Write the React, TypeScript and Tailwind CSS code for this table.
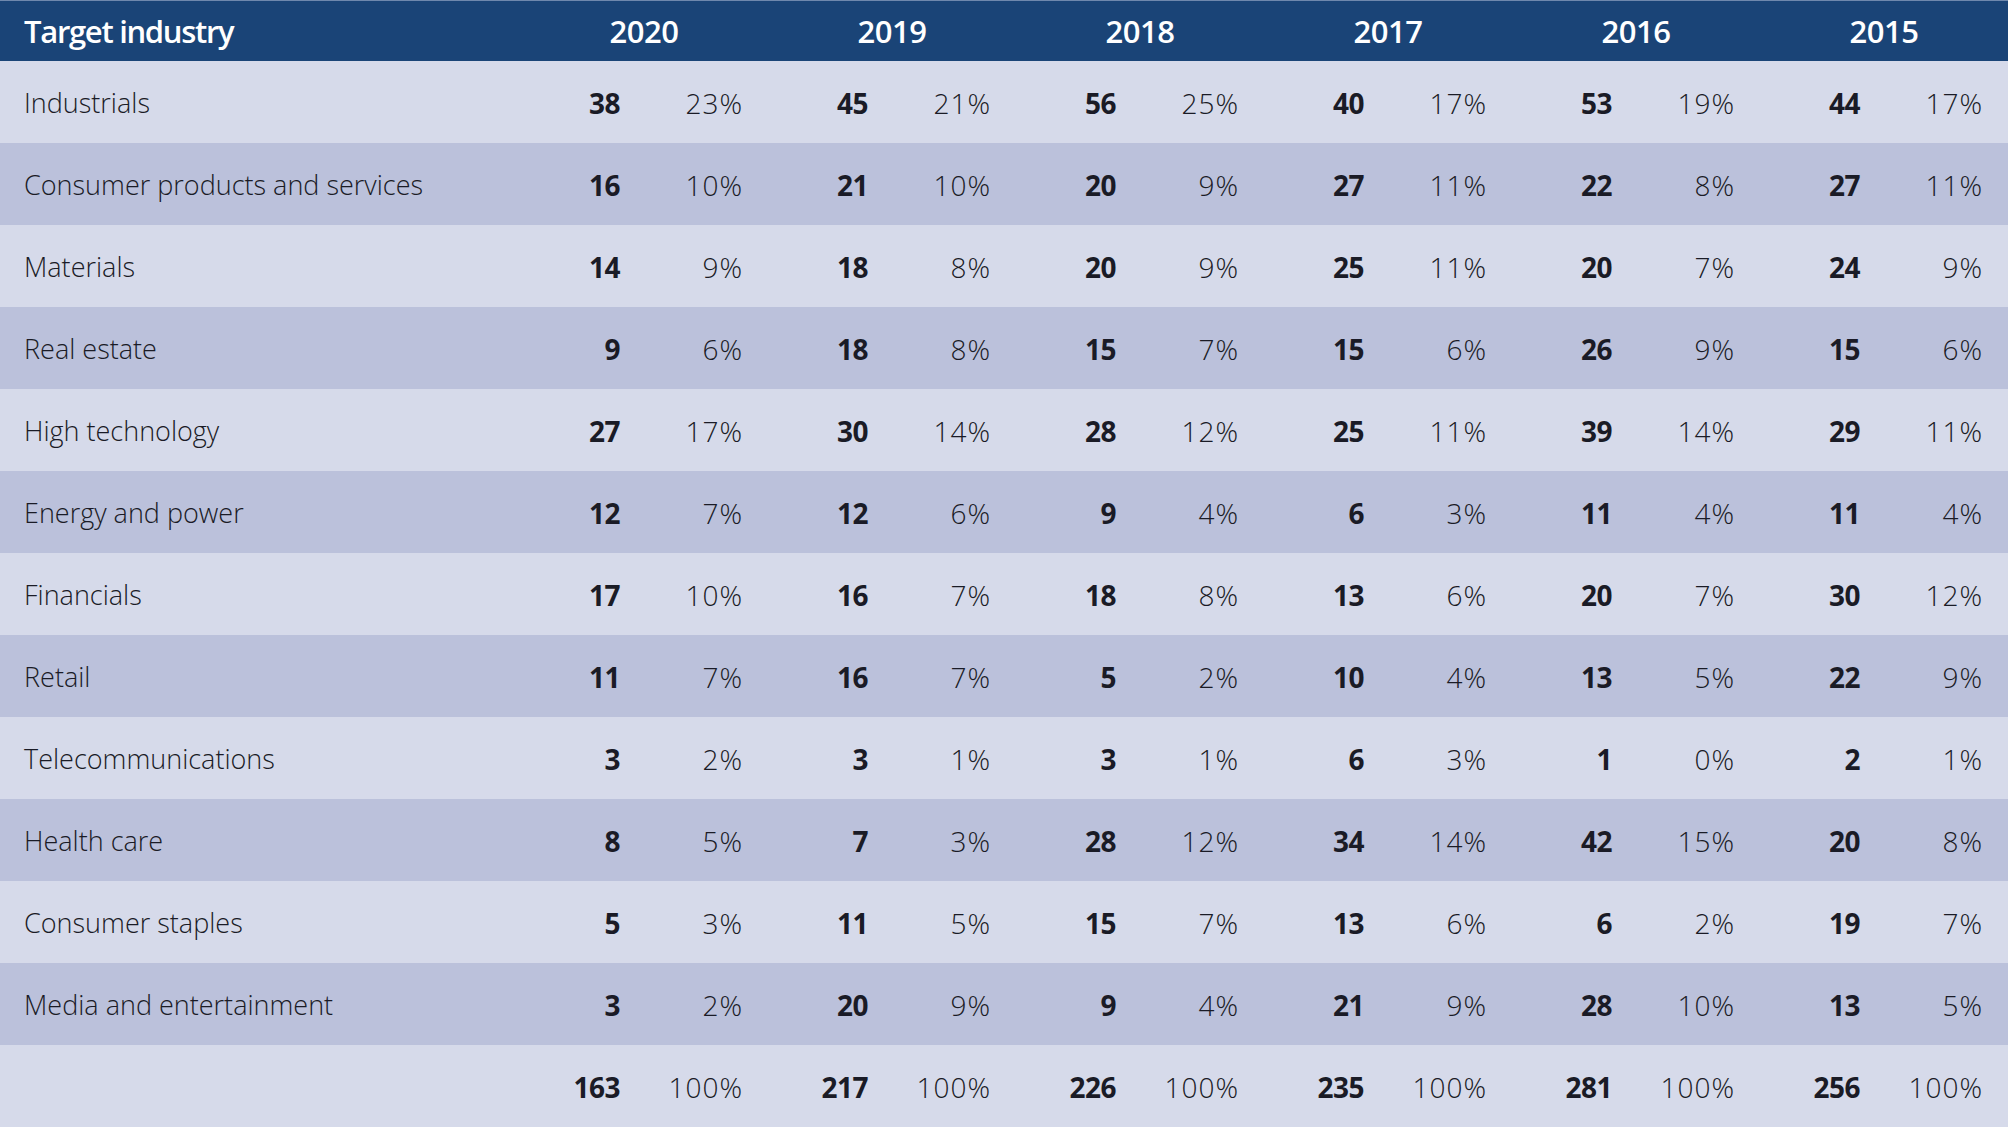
import React from "react";

const years = ["2020", "2019", "2018", "2017", "2016", "2015"];

const rows: [string, [string, string][]][] = [
  ["Industrials", [["38", "23%"], ["45", "21%"], ["56", "25%"], ["40", "17%"], ["53", "19%"], ["44", "17%"]]],
  ["Consumer products and services", [["16", "10%"], ["21", "10%"], ["20", "9%"], ["27", "11%"], ["22", "8%"], ["27", "11%"]]],
  ["Materials", [["14", "9%"], ["18", "8%"], ["20", "9%"], ["25", "11%"], ["20", "7%"], ["24", "9%"]]],
  ["Real estate", [["9", "6%"], ["18", "8%"], ["15", "7%"], ["15", "6%"], ["26", "9%"], ["15", "6%"]]],
  ["High technology", [["27", "17%"], ["30", "14%"], ["28", "12%"], ["25", "11%"], ["39", "14%"], ["29", "11%"]]],
  ["Energy and power", [["12", "7%"], ["12", "6%"], ["9", "4%"], ["6", "3%"], ["11", "4%"], ["11", "4%"]]],
  ["Financials", [["17", "10%"], ["16", "7%"], ["18", "8%"], ["13", "6%"], ["20", "7%"], ["30", "12%"]]],
  ["Retail", [["11", "7%"], ["16", "7%"], ["5", "2%"], ["10", "4%"], ["13", "5%"], ["22", "9%"]]],
  ["Telecommunications", [["3", "2%"], ["3", "1%"], ["3", "1%"], ["6", "3%"], ["1", "0%"], ["2", "1%"]]],
  ["Health care", [["8", "5%"], ["7", "3%"], ["28", "12%"], ["34", "14%"], ["42", "15%"], ["20", "8%"]]],
  ["Consumer staples", [["5", "3%"], ["11", "5%"], ["15", "7%"], ["13", "6%"], ["6", "2%"], ["19", "7%"]]],
  ["Media and entertainment", [["3", "2%"], ["20", "9%"], ["9", "4%"], ["21", "9%"], ["28", "10%"], ["13", "5%"]]],
  ["", [["163", "100%"], ["217", "100%"], ["226", "100%"], ["235", "100%"], ["281", "100%"], ["256", "100%"]]],
];

export default function App() {
  return (
    <div className="w-[2008px] h-[1127px] overflow-hidden bg-[#d6daea] text-[#1a1b26] [font-family:'Open_Sans',sans-serif]">
      <div className="flex h-[61px] items-center bg-[#1a4477] border-t border-[#6f88ad] text-white font-semibold text-[31px]">
        <div className="w-[520px] pl-[24px] tracking-[-1.3px]">Target industry</div>
        {years.map((y) => (
          <div key={y} className="w-[248px] text-center tracking-[-0.5px]">
            {y}
          </div>
        ))}
      </div>
      {rows.map(([label, vals], i) => (
        <div
          key={i}
          className={`flex h-[82px] items-center pt-[2px] ${i % 2 === 1 ? "bg-[#bbc1db]" : "bg-[#d6daea]"}`}
        >
          <div className="w-[520px] pl-[24px] text-[27px] font-light">{label}</div>
          {vals.map(([n, p], j) => (
            <div key={j} className="w-[248px] flex">
              <div className="w-[100px] text-right text-[28px] font-bold tracking-[-0.5px]">{n}</div>
              <div className="w-[123px] text-right text-[28px] font-light tracking-[1px]">{p}</div>
            </div>
          ))}
        </div>
      ))}
    </div>
  );
}
